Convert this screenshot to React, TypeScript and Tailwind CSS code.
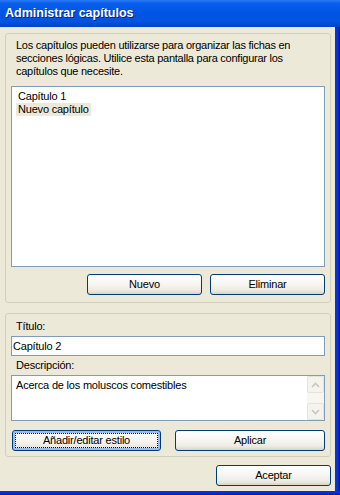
import React from "react";

const btn =
  "h-[21px] rounded-[3px] border border-[#003C74] bg-[linear-gradient(180deg,#ffffff_0%,#f7f6f2_45%,#ecebe4_80%,#d9d5c8_100%)] text-[11px] tracking-[-0.2px] text-black flex items-center justify-center";

function Chevron({ up }: { up?: boolean }) {
  return (
    <svg width="9" height="6" viewBox="0 0 9 6">
      <path
        d={up ? "M1 5 L4.5 1.5 L8 5" : "M1 1 L4.5 4.5 L8 1"}
        fill="none"
        stroke="#C9C7BA"
        strokeWidth="1.6"
      />
    </svg>
  );
}

export default function App() {
  return (
    <div className="w-[340px] h-[495px] flex flex-col bg-[#ECE9D8] font-['Liberation_Sans',Arial,sans-serif] overflow-hidden">
      {/* ===== barra de título ===== */}
      <div className="h-[27px] shrink-0 flex items-center pl-[5px] bg-[linear-gradient(180deg,#2D7CF6_0%,#0A5EEC_12%,#0055E5_45%,#0253E0_80%,#0043C4_100%)]">
        <span className="text-white font-bold text-[12.5px] [text-shadow:1px_1px_#0A1E8A]">
          Administrar capítulos
        </span>
      </div>

      <div className="flex-1 flex min-h-0">
        <div className="flex-1 flex flex-col pl-[5px] pr-[4px] pt-[6px]">
          {/* ===== grupo capítulos ===== */}
          <div className="rounded-[3px] border border-[#D0D0BF] px-[5px] pt-[5px] pb-[7px] flex flex-col">
            <p className="pl-[5px] text-[11px] leading-[13px] tracking-[-0.25px] text-black">
              Los capítulos pueden utilizarse para organizar las fichas en
              <br />
              secciones lógicas. Utilice esta pantalla para configurar los
              <br />
              capítulos que necesite.
            </p>
            <div className="mt-[8px] h-[181px] border border-[#7F9DB9] bg-white pt-[3px] pl-[4px] text-[11px] tracking-[-0.2px] leading-[13px] text-black">
              <div className="px-[2px] w-fit">Capítulo 1</div>
              <div className="px-[2px] w-fit bg-[#ECE9D8]">Nuevo capítulo</div>
            </div>
            <div className="mt-[7px] flex justify-end gap-[8px]">
              <button className={`${btn} w-[115px]`}>Nuevo</button>
              <button className={`${btn} w-[115px]`}>Eliminar</button>
            </div>
          </div>

          {/* ===== grupo detalle ===== */}
          <div className="mt-[10px] rounded-[3px] border border-[#D0D0BF] px-[5px] pt-[6px] pb-[5px] flex flex-col">
            <span className="pl-[5px] text-[11px] leading-[13px] tracking-[-0.2px] text-black">Título:</span>
            <div className="mt-[3px] h-[20px] border border-[#7F9DB9] bg-white flex items-center pl-[1px] text-[11px] tracking-[-0.2px] text-black">
              Capítulo 2
            </div>
            <span className="mt-[3px] pl-[5px] text-[11px] leading-[13px] tracking-[-0.2px] text-black">Descripción:</span>
            <div className="mt-[3px] h-[46px] border border-[#7F9DB9] bg-white flex">
              <div className="flex-1 pl-[4px] pt-[3px] text-[11px] leading-[13px] tracking-[-0.2px] text-black">
                Acerca de los moluscos comestibles
              </div>
              <div className="w-[17px] flex flex-col justify-between bg-[#F7F6F1]">
                <div className="h-[17px] rounded-[2px] border border-[#E6E4DA] bg-[#F4F3EE] flex items-center justify-center">
                  <Chevron up />
                </div>
                <div className="h-[17px] rounded-[2px] border border-[#E6E4DA] bg-[#F4F3EE] flex items-center justify-center">
                  <Chevron />
                </div>
              </div>
            </div>
            <div className="mt-[9px] flex justify-between pl-[1px]">
              <button
                className={`${btn} w-[149px] shadow-[inset_0_0_0_2px_#9DBAF0] outline-1 outline-dotted outline-black -outline-offset-4`}
              >
                Añadir/editar estilo
              </button>
              <button className={`${btn} w-[150px]`}>Aplicar</button>
            </div>
          </div>

          <div className="mt-[8px] flex justify-end">
            <button className={`${btn} w-[115px] h-[20px]`}>Aceptar</button>
          </div>
        </div>
        {/* marco derecho */}
        <div className="w-[5px] shrink-0 bg-[linear-gradient(90deg,#0831D9_0%,#0831D9_50%,#0019A0_100%)]" />
      </div>
      {/* marco inferior */}
      <div className="h-[4px] shrink-0 bg-[linear-gradient(180deg,#0831D9_0%,#0831D9_50%,#0019A0_100%)]" />
    </div>
  );
}
